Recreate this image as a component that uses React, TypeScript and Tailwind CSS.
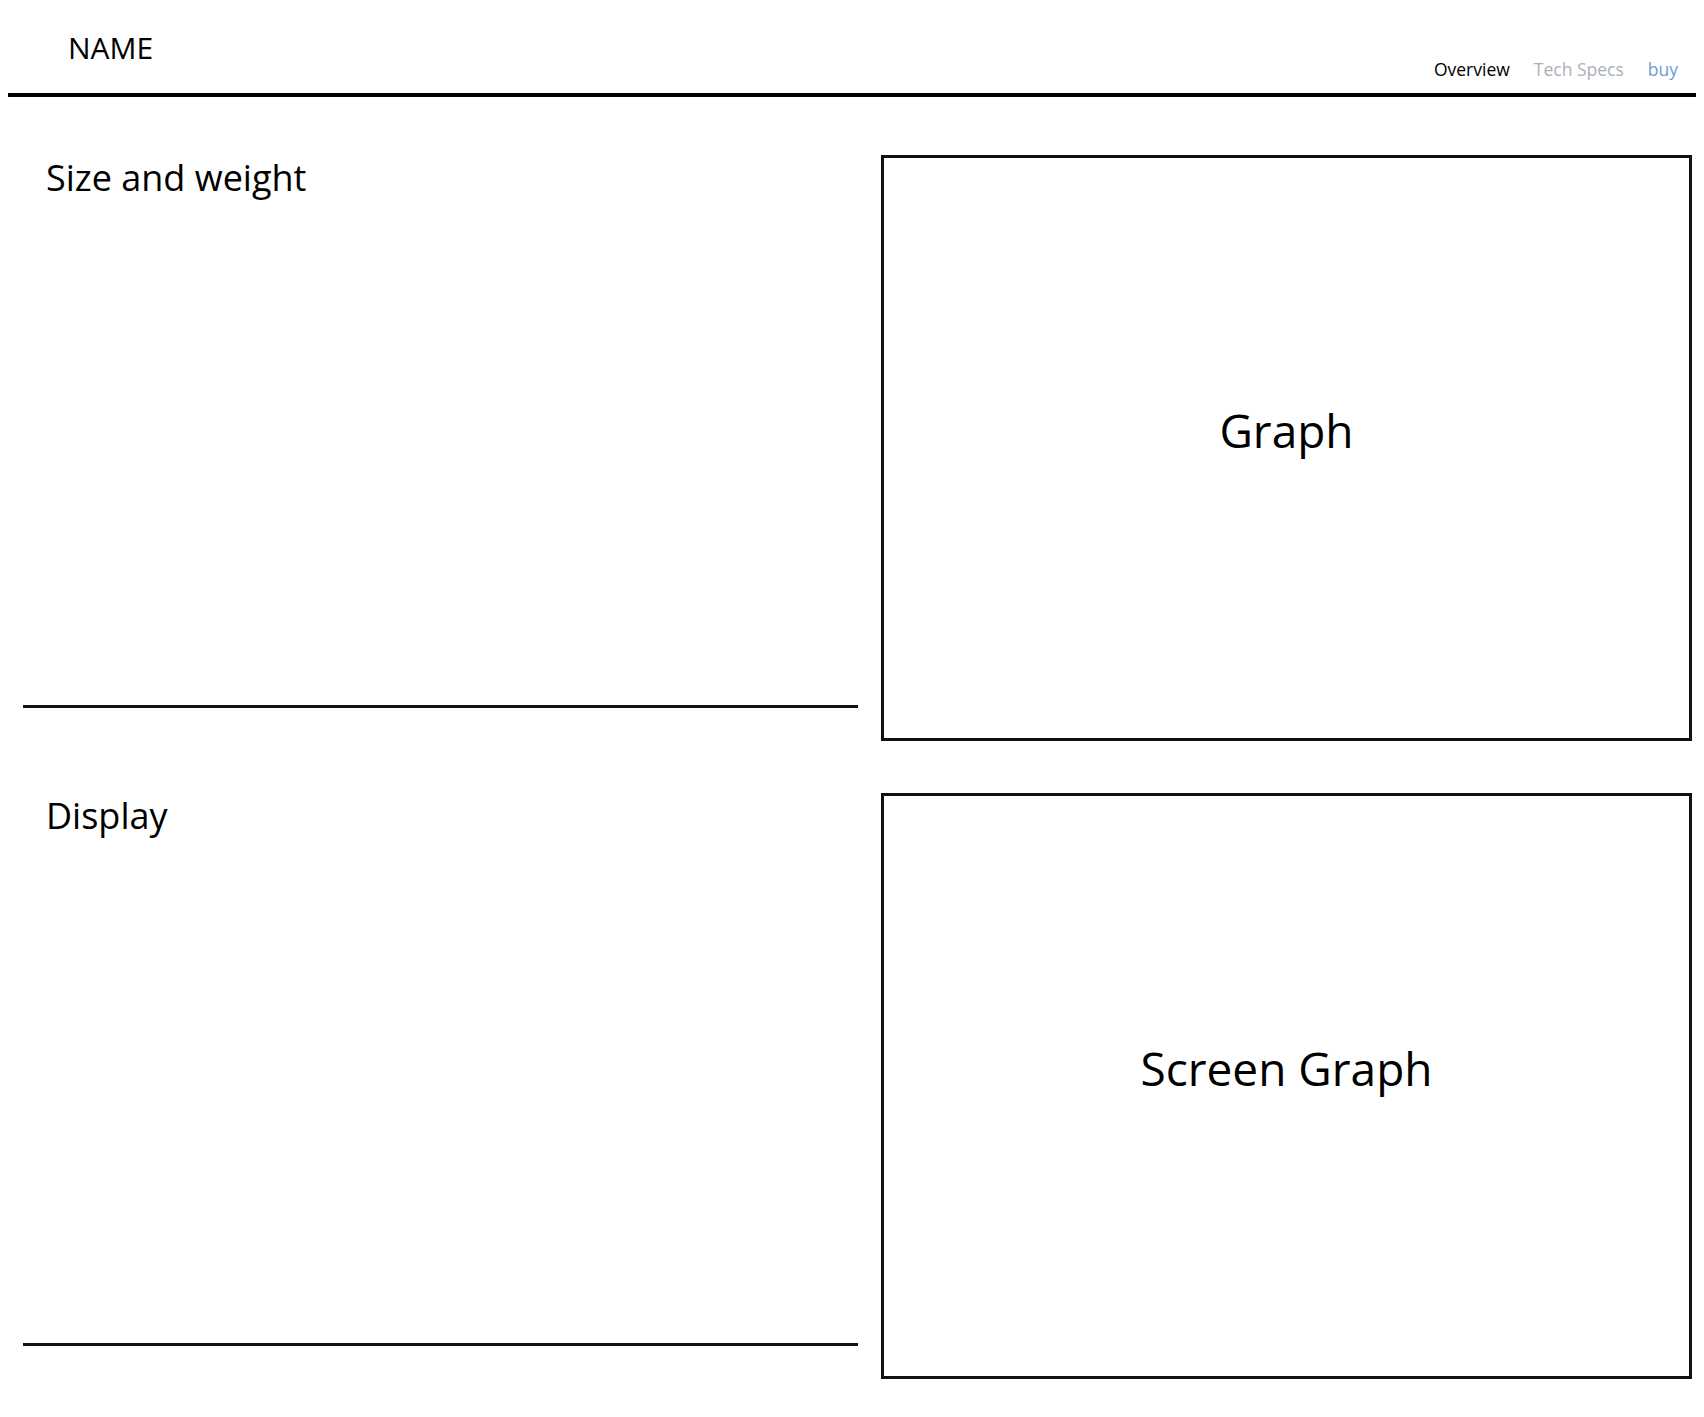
const font = { fontFamily: '"Open Sans", "Noto Sans", sans-serif' };

function Section({ title, graph }: { title: string; graph: string }) {
  return (
    <div className="flex h-[586px] gap-[23px]">
      <div className="flex w-[835px] flex-col justify-between">
        <h2 className="pl-[23px] pt-[5px] text-[36px] leading-none text-black">{title}</h2>
        <div className="mb-[33px] h-[3px] bg-[#111]" />
      </div>
      <div className="flex flex-1 items-center justify-center border-[3px] border-[#111] pb-[36px]">
        <span className="text-[46px] leading-none text-black">{graph}</span>
      </div>
    </div>
  );
}

export default function App() {
  return (
    <div className="min-h-[1417px] bg-white" style={font}>
      <header className="mx-2 flex h-[97px] justify-between border-b-4 border-black">
        <div className="pl-[60px] pt-[33px] text-[30px] leading-none text-black">NAME</div>
        <nav className="flex gap-6 self-end pb-[15px] pr-[18px] text-[17.5px] leading-none">
          <a className="text-black">Overview</a>
          <a className="text-[#aab0b8]">Tech Specs</a>
          <a className="text-[#6d9cd2]">buy</a>
        </nav>
      </header>

      <main className="mt-[58px] flex flex-col gap-[52px] pl-[23px] pr-[12px]">
        <Section title="Size and weight" graph="Graph" />
        <Section title="Display" graph="Screen Graph" />
      </main>
    </div>
  );
}
